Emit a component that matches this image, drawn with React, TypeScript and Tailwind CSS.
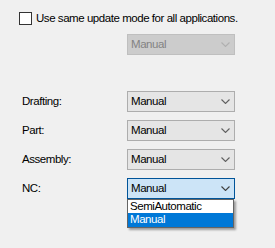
import React from "react";

const Chevron = ({ color = "#606060" }: { color?: string }) => (
  <svg width="9" height="5" viewBox="0 0 9 5" className="block">
    <polyline points="0.5,0.5 4.5,4.5 8.5,0.5" fill="none" stroke={color} strokeWidth="1.1" />
  </svg>
);

const Combo = ({
  value,
  variant = "normal",
}: {
  value: string;
  variant?: "normal" | "disabled" | "active";
}) => {
  const cls =
    variant === "disabled"
      ? "bg-[#cccccc] border-[#bfbfbf] text-[#838383]"
      : variant === "active"
      ? "bg-[#cce4f7] border-[#005499] text-black"
      : "bg-[#e5e5e5] border-[#adadad] text-black";
  return (
    <div
      className={`w-[108px] h-[21px] border flex items-center justify-between pl-[3px] pr-[4px] ${cls}`}
    >
      <span className="leading-none">{value}</span>
      <Chevron color={variant === "disabled" ? "#b0b0b0" : variant === "active" ? "#404040" : "#606060"} />
    </div>
  );
};

const Row = ({ label, children }: { label: string; children: React.ReactNode }) => (
  <div className="flex items-center">
    <div className="w-[127px] pl-[22px] leading-none">{label}</div>
    {children}
  </div>
);

export default function App() {
  return (
    <div
      className="w-[275px] h-[248px] bg-[#f0f0f0] text-[11.5px] tracking-[-0.45px] text-black relative overflow-hidden"
      style={{ fontFamily: '"Liberation Sans", Arial, sans-serif' }}
    >
      <div className="pt-[12px] pl-[19px] flex items-center gap-[4px]">
        <div className="w-[13px] h-[13px] border border-[#333333] bg-white" />
        <span className="leading-none">Use same update mode for all applications.</span>
      </div>
      <div className="mt-[9px] pl-[127px]">
        <Combo value="Manual" variant="disabled" />
      </div>
      <div className="mt-[36px] flex flex-col gap-[8px]">
        <Row label="Drafting:">
          <Combo value="Manual" />
        </Row>
        <Row label="Part:">
          <Combo value="Manual" />
        </Row>
        <Row label="Assembly:">
          <Combo value="Manual" />
        </Row>
        <Row label="NC:">
          <div className="relative">
            <Combo value="Manual" variant="active" />
            <div className="absolute left-0 top-[21px] w-[107px] border border-[#646464] bg-white shadow-[2px_2px_2px_rgba(0,0,0,0.35)] z-10">
              <div className="h-[13px] flex items-center pl-[2px] leading-none">SemiAutomatic</div>
              <div className="h-[14px] flex items-center pl-[2px] leading-none bg-[#0078d7] text-white">Manual</div>
            </div>
          </div>
        </Row>
      </div>
    </div>
  );
}
